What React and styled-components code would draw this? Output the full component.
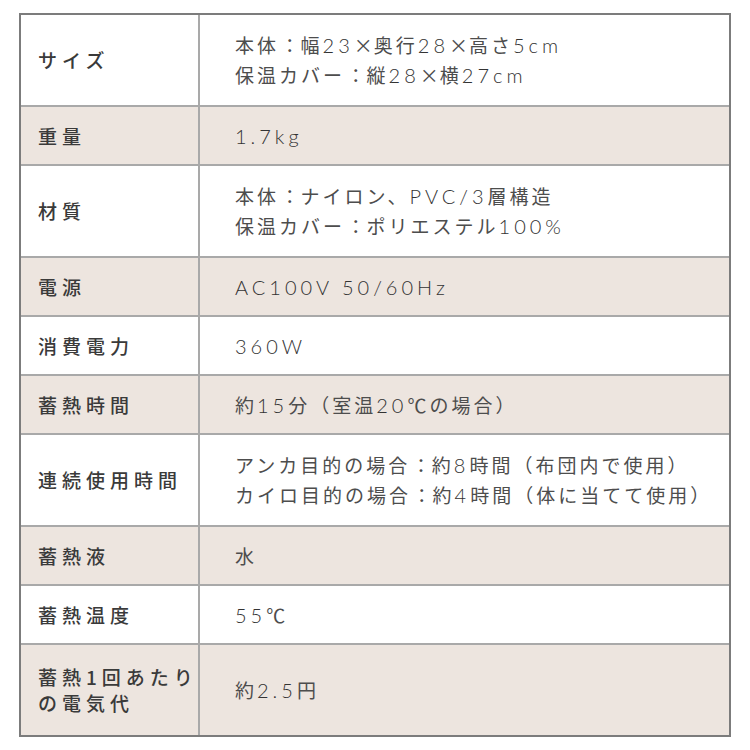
import React from "react";
import styled, { createGlobalStyle } from "styled-components";

const Global = createGlobalStyle`
  html, body { margin: 0; padding: 0; background: #ffffff; }
  body { font-family: "Noto Sans CJK JP", "Noto Sans", sans-serif; }
`;

const Table = styled.div`
  box-sizing: border-box;
  width: 712px;
  margin: 13px 0 0 19px;
  border: 2px solid #7c7c7c;
`;

const Row = styled.div`
  display: grid;
  grid-template-columns: 179px 1fr;
  min-height: ${(p) => (p.$tall ? 90 : 57)}px;
  background: ${(p) => (p.$shade ? "#ede5df" : "#ffffff")};
  & + & { border-top: 2px solid #a9a9a9; }
`;

const Label = styled.div`
  display: flex;
  align-items: center;
  padding-left: 17px;
  border-right: 2px solid #a9a9a9;
  font-size: 19px;
  font-weight: 500;
  letter-spacing: 5px;
  line-height: 26px;
  color: #3a3a3a;
`;

const Value = styled.div`
  display: flex;
  flex-direction: column;
  justify-content: center;
  padding-left: 35px;
  font-family: "Noto Sans CJK JP", sans-serif;
  font-size: 19px;
  font-weight: 400;
  letter-spacing: 3px;
  line-height: 29px;
  color: #4d4d4d;
`;

const Latin = styled.span`
  font-family: "Lato", "Noto Sans CJK JP", sans-serif;
  font-size: 20px;
  font-weight: 300;
  letter-spacing: 4px;
  color: #333333;
`;

const Colon = styled.span`
  font-feature-settings: "palt";
  letter-spacing: 0;
  margin: 0 6px;
`;

const Times = styled.span`
  letter-spacing: 1px;
`;

const renderValue = (text) =>
  text.split(/([：×]|[A-Za-z0-9.%/ ]+)/).filter(Boolean).map((p, i) => {
    if (p === "：") return <Colon key={i}>：</Colon>;
    if (p === "×") return <Times key={i}>×</Times>;
    if (/^[A-Za-z0-9.%/ ]+$/.test(p)) return <Latin key={i}>{p}</Latin>;
    return <React.Fragment key={i}>{p}</React.Fragment>;
  });

const rows = [
  { label: ["サイズ"], value: ["本体：幅23×奥行28×高さ5cm", "保温カバー：縦28×横27cm"], tall: true },
  { label: ["重量"], value: ["1.7kg"] },
  { label: ["材質"], value: ["本体：ナイロン、PVC/3層構造", "保温カバー：ポリエステル100%"], tall: true },
  { label: ["電源"], value: ["AC100V 50/60Hz"] },
  { label: ["消費電力"], value: ["360W"] },
  { label: ["蓄熱時間"], value: ["約15分（室温20℃の場合）"] },
  { label: ["連続使用時間"], value: ["アンカ目的の場合：約8時間（布団内で使用）", "カイロ目的の場合：約4時間（体に当てて使用）"], tall: true },
  { label: ["蓄熱液"], value: ["水"] },
  { label: ["蓄熱温度"], value: ["55℃"] },
  { label: ["蓄熱1回あたり", "の電気代"], value: ["約2.5円"], tall: true },
];

export default function App() {
  return (
    <>
      <Global />
      <Table>
        {rows.map((r, i) => (
          <Row key={i} $shade={i % 2 === 1} $tall={r.tall}>
            <Label>
              <div>
                {r.label.map((l, j) => (
                  <div key={j}>{l}</div>
                ))}
              </div>
            </Label>
            <Value>
              {r.value.map((v, j) => (
                <div key={j}>{renderValue(v)}</div>
              ))}
            </Value>
          </Row>
        ))}
      </Table>
    </>
  );
}
